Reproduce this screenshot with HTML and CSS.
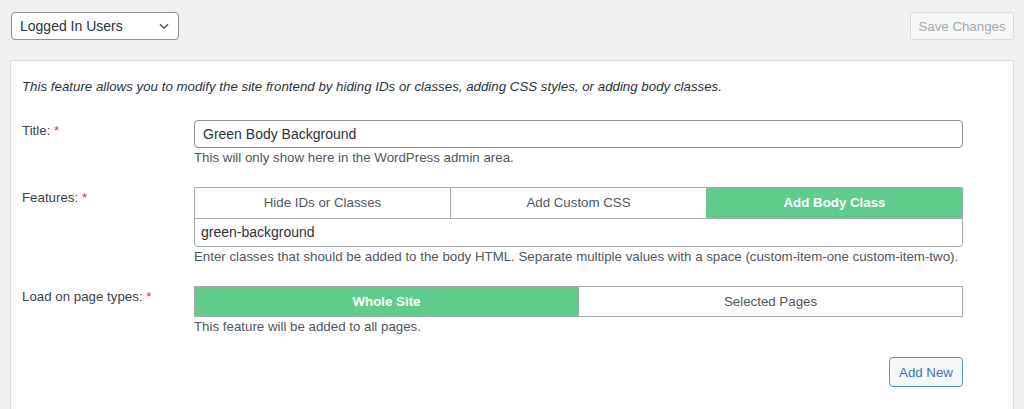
FILE: index.html
```html
<!DOCTYPE html>
<html>
	<head>
		<meta charset="utf-8">
		<title>Frontend Features</title>
		<link rel="stylesheet" href="styles.css">
	</head>
	<body>
		<div class='page'>
			<div class='topbar'>
				<div class='roleSelect'>
					<span>Logged In Users</span>
					<svg class='chev' width="10" height="7" viewBox="0 0 10 7"><path d="M1 1.2 L5 5.2 L9 1.2" fill="none" stroke="#50575e" stroke-width="1.5"/></svg>
				</div>
				<button class='saveBtn' type="button" disabled>Save Changes</button>
			</div>

			<div class='panel'>
				<p class='intro'>This feature allows you to modify the site frontend by hiding IDs or classes, adding CSS styles, or adding body classes.</p>

				<div class='row'>
					<div class='label'>Title: <span class='req'>*</span></div>
					<div class='field'>
						<div class='textInput'>Green Body Background</div>
						<div class='help'>This will only show here in the WordPress admin area.</div>
					</div>
				</div>

				<div class='row'>
					<div class='label'>Features: <span class='req'>*</span></div>
					<div class='field'>
						<div class='group'>
							<div class='tabs'>
								<div class='tab'>Hide IDs or Classes</div>
								<div class='tab'>Add Custom CSS</div>
								<div class='tab active'>Add Body Class</div>
							</div>
							<div class='groupInput'>green-background</div>
						</div>
						<div class='help'>Enter classes that should be added to the body HTML. Separate multiple values with a space (custom-item-one custom-item-two).</div>
					</div>
				</div>

				<div class='row'>
					<div class='label'>Load on page types: <span class='req'>*</span></div>
					<div class='field'>
						<div class='tabs single'>
							<div class='tab active'>Whole Site</div>
							<div class='tab'>Selected Pages</div>
						</div>
						<div class='help'>This feature will be added to all pages.</div>
					</div>
				</div>

				<div class='actions'>
					<button class='addBtn' type="button">Add New</button>
				</div>
			</div>
		</div>
	</body>
</html>
```

FILE: styles.css
```css
body{
	margin:0;
	background-color:#f0f0f1;
	font-family:"Liberation Sans", Arial, sans-serif;
	font-size:13.3px;
	color:#3c434a;
}
.page{
	padding:12px 10px 0 10px;
}
.topbar{
	display:flex;
	justify-content:space-between;
	align-items:flex-start;
}
.roleSelect{
	margin-left:1px;
	width:168px;
	height:28px;
	box-sizing:border-box;
	border:1px solid #8c8f94;
	border-radius:4px;
	background-color:#fff;
	display:flex;
	align-items:center;
	justify-content:space-between;
	padding:0 9px 0 8px;
	font-size:14px;
	color:#2c3338;
}
.saveBtn{
	width:104px;
	height:28px;
	border:1px solid #dcdcde;
	border-radius:3px;
	background-color:#f6f7f7;
	color:#a7aaad;
	font-family:inherit;
	font-size:13.3px;
	padding:0;
}
.panel{
	margin-top:20px;
	background-color:#fff;
	border:1px solid #dcdcde;
	padding:16px 50px 40px 11px;
}
.intro{
	margin:0 0 23px 0;
	line-height:20px;
	font-style:italic;
	color:#2c3338;
}
.row{
	display:flex;
	margin-bottom:19px;
}
.label{
	width:172px;
	flex:none;
	padding-top:1px;
	line-height:20px;
	color:#3c434a;
}
.req{
	color:#d63638;
}
.field{
	flex:1;
}
.textInput{
	height:28px;
	box-sizing:border-box;
	border:1px solid #8c8f94;
	border-radius:4px;
	padding:0 8px;
	line-height:26px;
	font-size:14px;
	color:#2c3338;
}
.help{
	line-height:20px;
	color:#50575e;
}
.group{
	border:1px solid #a7aaad;
	border-radius:0 0 4px 4px;
}
.tabs{
	display:flex;
	height:30px;
}
.group .tabs{
	border-bottom:1px solid #a7aaad;
}
.tabs.single{
	border:1px solid #a7aaad;
	height:29px;
}
.tab{
	flex:1;
	text-align:center;
	line-height:30px;
	color:#50575e;
	border-left:1px solid #a7aaad;
}
.single .tab{
	line-height:29px;
}
.tab:first-child{
	border-left:none;
}
.tab.active{
	background-color:#5fcc8c;
	color:#fff;
	font-weight:bold;
	border-left-color:#5fcc8c;
}
.groupInput{
	height:27px;
	line-height:27px;
	padding:0 6px;
	font-size:14px;
	color:#2c3338;
}
.actions{
	display:flex;
	justify-content:flex-end;
	padding-top:1px;
}
.addBtn{
	width:74px;
	height:30px;
	border:1px solid #5b8fcb;
	border-radius:4px;
	background-color:#f6f7f7;
	color:#3a78b8;
	font-family:inherit;
	font-size:13.3px;
	padding:0;
}
```
